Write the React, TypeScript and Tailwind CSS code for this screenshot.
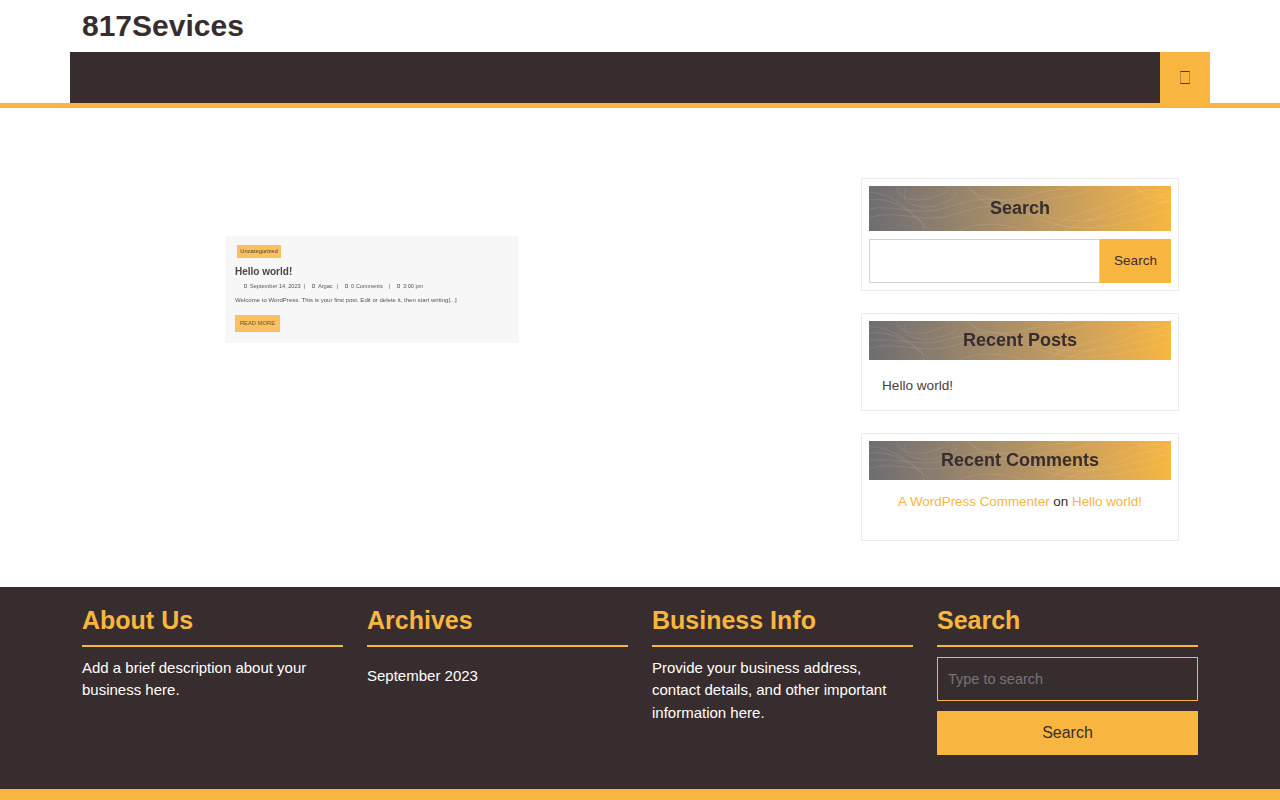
import React from "react"

// topographic lines on the widget titles, each drawn a few times with an offset
const contourPaths = [
  "M-10 26 C20 14 44 32 76 22 S126 8 160 24 S232 40 312 10",
  "M30 -4 C22 10 44 18 62 12 S84 2 76 -4",
  "M96 -4 C104 14 136 18 158 10 S196 6 214 -4",
  "M176 50 C190 28 226 26 250 14 S286 2 312 8",
  "M-10 8 C10 2 28 14 42 26 S58 44 50 50",
  "M84 50 C98 36 126 36 146 42 S160 48 164 50",
  "M262 -4 C268 6 282 12 296 8 S310 2 312 0",
]
const contourOffsets = [0, 7]

function WidgetTitle({ title, tall }: { title: string; tall?: boolean }) {
  return (
    <div className={`relative flex items-center justify-center overflow-hidden bg-linear-to-r from-[#6e6d71] to-[#f8b640] pb-[1px] ${tall ? "h-[45px]" : "h-[39px]"}`}>
      <svg className="absolute inset-0 h-full w-full" viewBox="0 0 302 45" preserveAspectRatio="none" fill="none" stroke="#ffffff" strokeOpacity="0.14" strokeWidth="0.7">
        {contourPaths.map((d) =>
          contourOffsets.map((y) => <path key={d + y} d={d} transform={`translate(${y} ${y})`} />)
        )}
      </svg>
      <h3 className="relative text-[18px] leading-none font-bold text-[#382d2e] blur-[0.2px]">{title}</h3>
    </div>
  )
}

function Widget({ title, tall, className, children }: { title: string; tall?: boolean; className: string; children: React.ReactNode }) {
  return (
    <section className={`border border-[#ebebeb] p-[7px] ${className}`}>
      <WidgetTitle title={title} tall={tall} />
      {children}
    </section>
  )
}

function MetaItem({ text, className }: { text: string; className: string }) {
  return (
    <span className={`flex items-center ${className}`}>
      <span className="mr-[3px] h-[4px] w-[3px] flex-none border-[0.5px] border-[#999999]" />
      <span className="whitespace-nowrap">{text}</span>
    </span>
  )
}

function FooterColumn({ title, children }: { title: string; children: React.ReactNode }) {
  return (
    <div className="w-[261px]">
      <h2 className="h-[60px] border-b-2 border-[#f8b640] pt-[17px] text-[25px] leading-[32px] font-bold text-[#f8b640]">{title}</h2>
      {children}
    </div>
  )
}

export default function App() {
  return (
    <div className="min-h-[800px] bg-white font-['Liberation_Sans',Arial,sans-serif] text-[#382d2e]">
      <header>
        <div className="h-[52px] pl-[82px] text-[30px] leading-[52px] font-bold">817Sevices</div>
        <div className="border-b-[5px] border-[#f8b640] px-[70px]">
          <nav className="flex h-[51px] justify-end bg-[#382d2e]">
            <button className="flex h-[51px] w-[50px] items-center justify-center bg-[#f8b640]">
              <span className="h-[13px] w-[10px] border border-y-[#3e3f48] border-x-[#b98a3c]" />
            </button>
          </nav>
        </div>
      </header>

      <main className="flex h-[479px] pt-[70px] pl-[225px]">
        <div className="w-[636px] pt-[58px]">
          <article className="h-[107px] w-[294px] bg-[#f7f7f7] pt-[9px] pl-[10px] text-[#555555] blur-[0.4px]">
            <span className="ml-[2px] block h-[13px] w-[44px] bg-[#fbc15f] text-center text-[5.8px] leading-[13px] text-[#4a4038]">Uncategorized</span>
            <h2 className="mt-[7px] text-[10px] leading-[14px] font-bold text-[#4d4546]">Hello world!</h2>
            <div className="mt-[2px] flex h-[10px] items-center pl-[9px] text-[5.6px] leading-[10px]">
              <MetaItem text="September 14, 2023" className="w-[60px]" />
              <span className="w-[8px]">|</span>
              <MetaItem text="Argac" className="w-[25px]" />
              <span className="w-[8px]">|</span>
              <MetaItem text="0 Comments" className="w-[44px]" />
              <span className="w-[8px]">|</span>
              <MetaItem text="3:00 pm" className="w-[40px]" />
            </div>
            <p className="mt-[4px] text-[6.05px] leading-[10px]">Welcome to WordPress. This is your first post. Edit or delete it, then start writing[...]</p>
            <span className="mt-[10px] block h-[17px] w-[45px] bg-[#fbc15f] text-center text-[5.8px] leading-[17px] text-[#5f5340]">READ MORE</span>
          </article>
        </div>

        <aside className="w-[318px] text-[13.6px]">
          <Widget title="Search" tall className="h-[113px]">
            <div className="mt-[8px] flex h-[44px]">
              <input className="h-[44px] w-[231px] border border-[#d4d4d4] bg-white" aria-label="Search" />
              <button className="h-[44px] w-[71px] bg-[#f8b640] text-[13.5px]">Search</button>
            </div>
          </Widget>
          <Widget title="Recent Posts" className="mt-[22px] h-[98px]">
            <p className="mt-[18px] pl-[13px] leading-[16px] text-[#4a4041]">Hello world!</p>
          </Widget>
          <Widget title="Recent Comments" className="mt-[21.5px] h-[108.5px]">
            <p className="mt-[14px] text-center text-[13.4px] leading-[16px]">
              <a className="text-[#f8b640]">A WordPress Commenter</a> on <a className="text-[#f8b640]">Hello world!</a>
            </p>
          </Widget>
        </aside>
      </main>

      <footer className="bg-[#382d2e]">
        <div className="flex h-[202px] gap-[24px] pl-[82px] text-[15px] leading-[22.4px] text-white">
          <FooterColumn title="About Us">
            <p className="mt-[10px]">Add a brief description about your business here.</p>
          </FooterColumn>
          <FooterColumn title="Archives">
            <p className="mt-[18px]">September 2023</p>
          </FooterColumn>
          <FooterColumn title="Business Info">
            <p className="mt-[10px]">Provide your business address, contact details, and other important information here.</p>
          </FooterColumn>
          <FooterColumn title="Search">
            <input
              className="mt-[10px] block h-[44px] w-full border border-[#f8b640] bg-transparent px-[10px] text-[14.5px] placeholder:text-[#757575]"
              placeholder="Type to search"
            />
            <button className="mt-[10px] h-[44px] w-full bg-[#f8b640] text-[16px] text-[#382d2e]">Search</button>
          </FooterColumn>
        </div>
        <div className="h-[11px] bg-[#f8b640]" />
      </footer>
    </div>
  )
}
